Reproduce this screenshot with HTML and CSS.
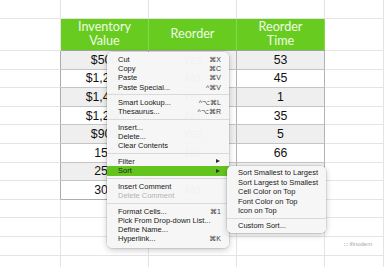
FILE: index.html
```html
<!DOCTYPE html>
<html>
<head>
<meta charset="utf-8">
<link rel="stylesheet" href="styles.css">
</head>
<body>
<div class="sheet">
  <div class="c"></div><div class="c"></div><div class="c"></div><div class="c"></div><div class="c"></div>

  <div class="c"></div>
  <div class="h">Inventory<br>Value</div>
  <div class="h">Reorder</div>
  <div class="h">Reorder<br>Time</div>
  <div class="c"></div>

  <div class="c edge"></div><div class="d alt">$500</div><div class="d alt">Yes</div><div class="d alt">53</div><div class="c"></div>
  <div class="c edge"></div><div class="d">$1,200</div><div class="d">No</div><div class="d">45</div><div class="c"></div>
  <div class="c edge"></div><div class="d alt">$1,400</div><div class="d alt">Yes</div><div class="d alt">1</div><div class="c"></div>
  <div class="c edge"></div><div class="d">$1,250</div><div class="d">No</div><div class="d">35</div><div class="c"></div>
  <div class="c edge"></div><div class="d alt">$900</div><div class="d alt">Yes</div><div class="d alt">5</div><div class="c"></div>
  <div class="c edge"></div><div class="d">150</div><div class="d">No</div><div class="d">66</div><div class="c"></div>
  <div class="c edge"></div><div class="d alt">250</div><div class="d alt">Yes</div><div class="d alt"></div><div class="c"></div>
  <div class="c edge"></div><div class="d last">300</div><div class="d last">No</div><div class="d last"></div><div class="c"></div>

  <div class="c"></div><div class="c"></div><div class="c"></div><div class="c"></div><div class="c"></div>
  <div class="c"></div><div class="c"></div><div class="c"></div><div class="c"></div><div class="c"></div>
  <div class="c"></div><div class="c"></div><div class="c"></div><div class="c"></div><div class="c"><span class="mark">∷ ifinodem</span></div>
  <div class="c"></div><div class="c"></div><div class="c"></div><div class="c"></div><div class="c"></div>
</div>

<div class="menu">
  <div class="item"><span>Cut</span><span class="key">⌘X</span></div>
  <div class="item"><span>Copy</span><span class="key">⌘C</span></div>
  <div class="item"><span>Paste</span><span class="key">⌘V</span></div>
  <div class="item"><span>Paste Special...</span><span class="key">^⌘V</span></div>
  <div class="sep"></div>
  <div class="item"><span>Smart Lookup...</span><span class="key">^⌥⌘L</span></div>
  <div class="item"><span>Thesaurus...</span><span class="key">^⌥⌘R</span></div>
  <div class="sep"></div>
  <div class="item"><span>Insert...</span></div>
  <div class="item"><span>Delete...</span></div>
  <div class="item"><span>Clear Contents</span></div>
  <div class="sep"></div>
  <div class="item"><span>Filter</span><span class="arrow"></span></div>
  <div class="item active"><span>Sort</span><span class="arrow"></span></div>
  <div class="sep"></div>
  <div class="item"><span>Insert Comment</span></div>
  <div class="item off"><span>Delete Comment</span></div>
  <div class="sep"></div>
  <div class="item"><span>Format Cells...</span><span class="key">⌘1</span></div>
  <div class="item"><span>Pick From Drop-down List...</span></div>
  <div class="item"><span>Define Name...</span></div>
  <div class="item"><span>Hyperlink...</span><span class="key">⌘K</span></div>
</div>

<div class="menu sub">
  <div class="item"><span>Sort Smallest to Largest</span></div>
  <div class="item"><span>Sort Largest to Smallest</span></div>
  <div class="item"><span>Cell Color on Top</span></div>
  <div class="item"><span>Font Color on Top</span></div>
  <div class="item"><span>Icon on Top</span></div>
  <div class="sep"></div>
  <div class="item"><span>Custom Sort...</span></div>
</div>
</body>
</html>
```

FILE: styles.css
```css
html, body {
  margin: 0;
  padding: 0;
  background: #ffffff;
  overflow: hidden;
  width: 384px;
  height: 267px;
}

.sheet {
  display: grid;
  grid-template-columns: 61px 88px 88px 88px 1fr;
  grid-template-rows: 19px 32px repeat(12, 18.6px);
  width: 384px;
  font-family: "Liberation Sans", Arial, sans-serif;
}

.c, .h, .d {
  box-sizing: border-box;
  border-right: 1px solid #e4e4e4;
  border-bottom: 1px solid #e4e4e4;
}

.c.edge {
  border-right-color: #acacac;
}

.h {
  background: #68cb20;
  color: #effbe4;
  font-family: Lato, "Open Sans", sans-serif;
  font-size: 12.6px;
  line-height: 14px;
  text-align: center;
  display: flex;
  align-items: center;
  justify-content: center;
  border-right-color: #86d64d;
  border-bottom-color: #9aa696;
  padding-bottom: 1px;
}

.d {
  background: #ffffff;
  border-right-color: #b3b3b3;
  border-bottom-color: #c4c4c4;
  font-size: 12.3px;
  color: #111;
  text-align: center;
  display: flex;
  align-items: center;
  justify-content: center;
}

.d.alt {
  background: #efefef;
}

.d.last {
  border-bottom-color: #acacac;
}

.mark {
  display: block;
  font-size: 6px;
  color: #a8a8a8;
  text-align: center;
  margin-top: 3px;
  margin-left: 8px;
}

.menu {
  position: absolute;
  left: 107px;
  top: 52px;
  width: 122px;
  box-sizing: border-box;
  padding: 3px 0 4.5px;
  background: rgba(246, 246, 246, 0.98);
  border-radius: 5px;
  box-shadow: 0 0 0 0.5px rgba(0, 0, 0, 0.16), 0 2px 6px rgba(0, 0, 0, 0.22);
  font-family: "Liberation Sans", Arial, sans-serif;
  font-size: 7.5px;
  color: #202020;
}

.menu.sub {
  left: 227px;
  top: 166px;
  width: 99px;
  padding: 2px 0 2.5px;
}

.item {
  height: 9.2px;
  line-height: 9.2px;
  padding: 0 8px 0 11px;
  display: flex;
  align-items: center;
  justify-content: space-between;
  white-space: nowrap;
  overflow: hidden;
}

.sub .item {
  height: 9.55px;
  line-height: 9.55px;
}

.item.active {
  background: #64c41e;
  height: 9.6px;
}

.item.off {
  color: #b4b4b4;
}

.key {
  font-family: "Liberation Sans", "DejaVu Sans", sans-serif;
  color: #3a3a3a;
  font-size: 7px;
  line-height: 9px;
}

.arrow {
  width: 0;
  height: 0;
  border-left: 4px solid #303030;
  border-top: 2.5px solid transparent;
  border-bottom: 2.5px solid transparent;
  margin-right: 1px;
}

.sep {
  height: 6.4px;
  display: flex;
  align-items: center;
}

.sub .sep {
  height: 5.6px;
}

.sep::before {
  content: "";
  flex: 1;
  height: 1px;
  background: #d9d9d9;
}
```
